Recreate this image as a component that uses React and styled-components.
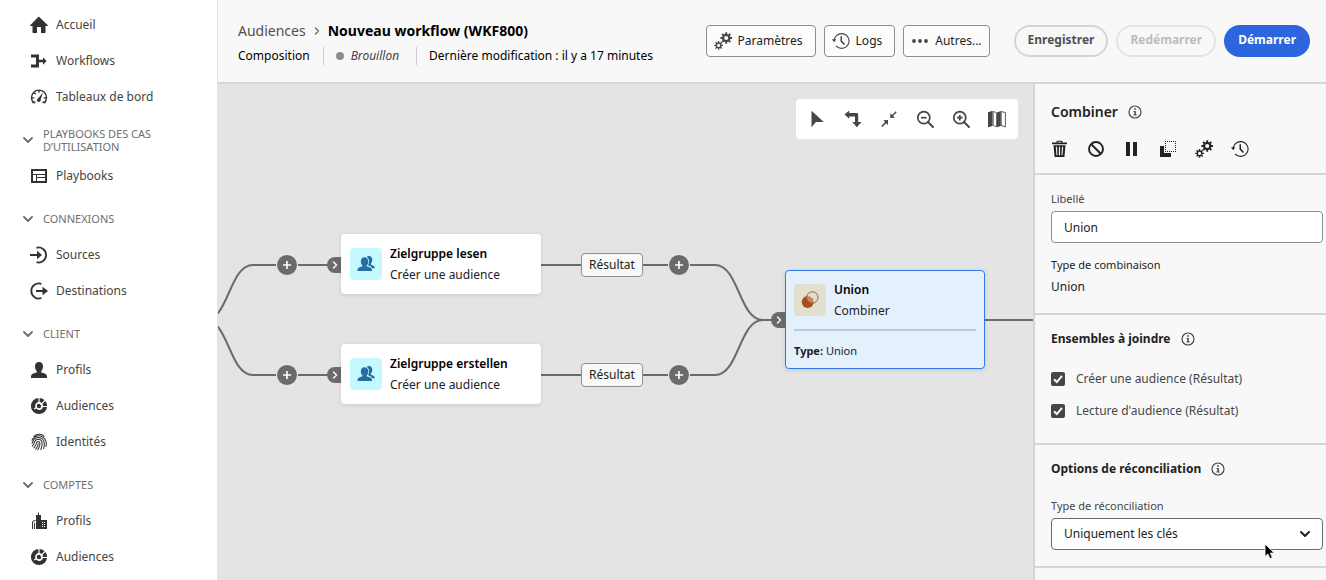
import React, { useState } from "react";
import styled, { createGlobalStyle, css } from "styled-components";

const GlobalStyle = createGlobalStyle`
  *, *::before, *::after { box-sizing: border-box; }
  html, body { margin: 0; height: 100%; }
  #root { height: 100%; }
  body {
    font-family: "Noto Sans", "Open Sans", sans-serif;
    font-size: 12px;
    line-height: 20px;
    color: #222;
    background: #f8f8f8;
    overflow: hidden;
  }
  button, input, select { font: inherit; color: inherit; margin: 0; }
  h1, h2, p, ul { margin: 0; padding: 0; }
`;

/* ---------- icons ---------- */

const Svg = styled.svg`
  display: block;
  flex: none;
  fill: currentColor;
`;

const Icon = ({ size = 18, children, box = 18 }) => (
  <Svg width={size} height={size} viewBox={`0 0 ${box} ${box}`} aria-hidden="true">
    {children}
  </Svg>
);

const gearPath = (cx, cy, outer, body, hole, teeth = 8) => {
  const pts = [];
  const step = (Math.PI * 2) / teeth;
  for (let i = 0; i < teeth; i++) {
    const a = i * step - Math.PI / 2;
    [[-0.3, body], [-0.2, outer], [0.2, outer], [0.3, body]].forEach(([o, r]) => {
      pts.push(`${(cx + Math.cos(a + o * step) * r).toFixed(2)} ${(cy + Math.sin(a + o * step) * r).toFixed(2)}`);
    });
  }
  return `M${pts.join("L")}Z M${cx - hole} ${cy}a${hole} ${hole} 0 1 0 ${hole * 2} 0a${hole} ${hole} 0 1 0 ${-hole * 2} 0Z`;
};

const HomeIcon = () => (
  <Icon><path d="M9 .8 17.8 9.2a.5.5 0 0 1-.4.8H15.5v6.3a.7.7 0 0 1-.7.7H11v-5.5a.5.5 0 0 0-.5-.5h-3a.5.5 0 0 0-.5.5V17H3.2a.7.7 0 0 1-.7-.7V10H.6a.5.5 0 0 1-.4-.8L8.5.8a.7.7 0 0 1 .5-.2Z" /></Icon>
);
const WorkflowIcon = () => (
  <Icon><path d="M1 2.500H9V7.800h4V5.300L16.500 9 13 12.700V10.200H9v5.300H1v-3h5V5.500H1Z" /></Icon>
);
const DashboardIcon = () => (
  <Icon>
    <path d="M3.6 14.8A7.500 7.500 0 1 1 14.400 14.800" fill="none" stroke="currentColor" strokeWidth="1.400" />
    <path d="M9 2v2.800M4.200 4.800l1.500 1.500M2 9.800h2.400M13.700 9.800H16" stroke="currentColor" strokeWidth="1.300" />
    <path d="M12.800 4.800 10.700 11.500a1.900 1.900 0 1 1-2.500-1.200Z" />
    <path d="M2.500 13.500h3v1.800h-3zM12.500 13.500h3v1.800h-3z" />
  </Icon>
);
const PlaybookIcon = () => (
  <Icon>
    <path fillRule="evenodd" d="M1.500 2h15a.5.5 0 0 1 .5.5v13a.5.5 0 0 1-.5.5h-15a.5.5 0 0 1-.5-.5v-13A.5.5 0 0 1 1.500 2ZM3 4v3h12V4ZM3 8v6h3V8ZM7 8v2h8V8ZM7 11v3h8v-3Z" />
  </Icon>
);
const SourceIcon = () => (
  <Icon>
    <path d="M6.500 1.800A7.500 7.500 0 1 1 6.500 16.200" fill="none" stroke="currentColor" strokeWidth="1.800" />
    <path d="M0 8h7V4.700L12 9l-5 4.300V10H0Z" />
  </Icon>
);
const DestinationIcon = () => (
  <Icon>
    <path d="M11.500 2A7.500 7.500 0 1 0 11.500 16" fill="none" stroke="currentColor" strokeWidth="1.800" />
    <path d="M6 8h6.500V4.700L18 9l-5.500 4.300V10H6Z" />
  </Icon>
);
const UserIcon = () => (
  <Icon><path d="M9 1c2.500 0 4 1.800 4 4.400 0 2-.9 3.500-1.700 4.500-.3.400-.2 1.500.4 1.700 3.300.9 5.300 2 5.300 3.900V17H1v-1.500c0-1.900 2-3 5.300-3.900.6-.2.7-1.300.4-1.700C5.900 8.900 5 7.400 5 5.400 5 2.800 6.500 1 9 1Z" /></Icon>
);
const AudienceIcon = () => (
  <Icon>
    <circle cx="9" cy="9" r="6" fill="none" stroke="currentColor" strokeWidth="4.200" />
    <circle cx="9" cy="9" r="2.300" />
    <path d="M9 6.500V0M10.500 8.200 16 2.400M11.500 9.500H18M6.500 10.500 4 12" stroke="#fff" strokeWidth="1.200" />
  </Icon>
);
const FingerprintIcon = () => (
  <Icon>
    <g fill="none" stroke="currentColor" strokeWidth="1.050" strokeLinecap="round">
      <path d="M4 3.400C6.800.6 11.800.7 14 3.400M2 7.200C4.200 2.200 10 1.600 13.600 4.600 16.500 7 16.600 10.500 16 13.500" />
      <path d="M2 10.200c.7-1 .8-2 1.600-3.200 2-3 6.500-3.400 9-.8 2.300 2.600 1.900 6.300 1 9.300" />
      <path d="M2.300 13c2-1.800 1.700-4 3.300-5.600 1.700-1.700 4.500-1.500 5.800.4 1.500 2.400.3 6.400-.6 8.700" />
      <path d="M3.800 14.800c2.300-2 2-4 3-5.500.9-1.200 2.600-.9 3 .3.400 1.500-.7 4.800-2 7.200" />
      <path d="M5.800 16.200c1.300-1.600 2-3.500 2.500-5.700" />
    </g>
  </Icon>
);
const BuildingIcon = () => (
  <Icon>
    <path fillRule="evenodd" d="M6 3h2V.5h1V3h2v5h6v9H6ZM12 10v1h1v-1ZM14 10v1h1v-1ZM12 12v1h1v-1ZM14 12v1h1v-1ZM12 14v1h1v-1ZM14 14v1h1v-1Z" />
    <path d="M2 17v-6.500C2 9 3.500 8 5.500 8v1C4 9 3 9.800 3 10.800V17ZM4 17v-6h1v6Z" />
  </Icon>
);
const GearsIcon = () => (
  <Icon>
    <path fillRule="evenodd" d={gearPath(12.2, 6, 5.9, 4.2, 2.1)} />
    <path fillRule="evenodd" d={gearPath(4.6, 13.4, 4.4, 3, 1.6)} />
  </Icon>
);
const HistoryIcon = () => (
  <Icon>
    <path d="M2.200 8A7.400 7.400 0 0 1 9.600 1.600 7.400 7.400 0 1 1 4 13.800" fill="none" stroke="currentColor" strokeWidth="1.100" />
    <path d="M-.1 7.200h4.400L2.200 10.200Z" />
    <path d="M8.500 4.300H10v4.500l3 3.200-1 1.100-3.500-3.600Z" />
  </Icon>
);
const MoreIcon = () => (
  <Icon><circle cx="3" cy="9" r="1.900" /><circle cx="9" cy="9" r="1.900" /><circle cx="15" cy="9" r="1.900" /></Icon>
);
const PointerIcon = () => (
  <Icon><path d="M3.500.8v16.400l4.400-5.300H15.800Z" /></Icon>
);
const PathIcon = () => (
  <Icon><path d="M5.200.5V3h7.300c1 0 1.700.7 1.700 1.700v7.300h3.300L12.800 17.300 8.300 12h2.700V6.500H5.200v2.300L.5 4.600Z" /></Icon>
);
const CollapseIcon = () => (
  <Icon>
    <path d="M10.300 8V3.200l1.800 1.700L15.700 1.300 16.700 2.300 13.100 5.900 15 7.800ZM8 10v5l-1.800-1.800L2.300 17 1.200 15.900 5.100 12.100 3.300 10.200Z" />
  </Icon>
);
const ZoomIcon = ({ plus }) => (
  <Icon>
    <circle cx="7.800" cy="7.700" r="6" fill="none" stroke="currentColor" strokeWidth="1.700" />
    <path d="m12 12 5 5" stroke="currentColor" strokeWidth="2" strokeLinecap="round" />
    <path d={plus ? "M5 7.700h5.600M7.800 4.900v5.600" : "M5 7.700h5.600"} stroke="currentColor" strokeWidth="1.700" />
  </Icon>
);
const MapIcon = () => (
  <Icon>
    <path d="M0 2.200 4.600.8V16L0 17.300ZM9 2.400 12.800 1V16L9 17.300Z" />
    <path d="M5.200 1.500 8.500 2.600V16.800L5.200 15.500Z" fill="none" stroke="currentColor" strokeWidth=".8" />
    <path d="M13.200 1.500 17.400 2.600V16.800L13.200 15.600Z" fill="none" stroke="currentColor" strokeWidth=".9" />
  </Icon>
);
const TrashIcon = () => (
  <Icon>
    <path fillRule="evenodd" d="M5.500 1.800C5.500 1 6 .7 6.500.7h4c.5 0 1 .3 1 1.100V2.500h4.500V4.200H1V2.500H5.500ZM6.700 1.800v.7h3.600v-.7ZM2.500 5.200h12l-1 11.200a.6.6 0 0 1-.6.600H4.100a.6.6 0 0 1-.6-.6ZM4.800 6.800l.7 8.400h1L6 6.800ZM7.900 6.800v8.400h1.200V6.800ZM11 6.800l-.5 8.400h1l.7-8.400Z" />
  </Icon>
);
const BlockIcon = () => (
  <Icon>
    <circle cx="9" cy="9" r="7" fill="none" stroke="currentColor" strokeWidth="1.900" />
    <path d="m4 4 10 10" stroke="currentColor" strokeWidth="1.900" />
  </Icon>
);
const PauseIcon = () => (
  <Icon><path d="M3 2h4v14H3zM10 2h4v14h-4z" /></Icon>
);
const DuplicateIcon = () => (
  <Icon>
    <path d="M1 6h4v7h7v4H1Z" />
    <path
      d="M6 1.500h11M6 11.500h11M6.500 3v8M16.500 3v8"
      fill="none" stroke="currentColor" strokeDasharray="1 1"
    />
  </Icon>
);
const InfoIcon = () => (
  <Icon size={14} box={14}>
    <circle cx="7" cy="7" r="6" fill="none" stroke="currentColor" strokeWidth="1.200" />
    <path d="M6.200 3.300h1.600v1.500H6.200ZM5.600 5.900h2.200v3.500h.8v1H5.500v-1h.8V6.900h-.7Z" />
  </Icon>
);
const Chevron = ({ size = 10, dir = "down", weight = 1.8 }) => (
  <Icon size={size} box={10}>
    <path
      d={dir === "down" ? "m1 3 4 4 4-4" : "m3.500 2 3 3-3 3"}
      fill="none" stroke="currentColor" strokeWidth={weight} strokeLinecap="round" strokeLinejoin="round"
    />
  </Icon>
);
const UsersIcon = () => (
  <Icon>
    <path d="M10 1.500c3-1.300 5.300.4 5.300 3.200 0 1.700-.7 2.900-1.300 3.700-.3.400-.2 1.200.3 1.400 2.200.8 3.500 1.700 3.500 3.400H15c-.6-1.600-2-2.400-4-3Z" />
    <path
      d="M7.500 2.300c2.400 0 3.800 1.700 3.800 4.100 0 1.800-.8 3.100-1.500 3.900-.3.400-.2 1.100.3 1.300 3.100.8 4.900 1.600 4.900 3.300V16H.5v-1.100c0-1.700 1.700-2.500 4.500-3.300.5-.2.600-.9.300-1.300-.7-.8-1.500-2.100-1.500-3.900 0-2.400 1.300-4.100 3.700-4.100Z"
      stroke="#c5f8ff" strokeWidth="1.400" paintOrder="stroke"
    />
  </Icon>
);
const UnionIcon = () => (
  <Icon>
    <defs>
      <pattern id="lens" width="1.600" height="1.600" patternUnits="userSpaceOnUse">
        <path d="M0 0h.9v.9H0zM.8.8h.8v.8H.8z" fill="#a84e1c" />
      </pattern>
      <clipPath id="upper"><circle cx="11.300" cy="6.500" r="5.700" /></clipPath>
    </defs>
    <circle cx="6.700" cy="11" r="6" />
    <circle cx="11.300" cy="6.500" r="5.700" fill="#e3dfcf" />
    <circle cx="6.700" cy="11" r="6" fill="url(#lens)" clipPath="url(#upper)" />
    <circle cx="11.300" cy="6.500" r="5.700" fill="none" stroke="currentColor" strokeWidth=".9" />
  </Icon>
);
const PlusIcon = () => (
  <Icon size={10} box={10}><path d="M5 1v8M1 5h8" stroke="currentColor" strokeWidth="1.600" /></Icon>
);
const CursorIcon = () => (
  <Svg width="12" height="17" viewBox="0 0 12 17" aria-hidden="true">
    <path d="M1 1v12.500l2.900-2.600 2 4.700 2.400-1-2-4.500h4Z" fill="#000" stroke="#fff" strokeWidth=".8" />
  </Svg>
);

/* ---------- shell ---------- */

const Shell = styled.div`
  display: flex;
  height: 100vh;
`;

const Sidebar = styled.nav`
  flex: none;
  width: 218px;
  padding-top: 7px;
  background: #fff;
  border-right: 1px solid #e4e4e4;
  overflow: hidden;
`;

const NavList = styled.ul`
  list-style: none;
`;

const NavLink = styled.a`
  display: flex;
  align-items: center;
  gap: 8px;
  height: 36px;
  padding-left: 30px;
  color: #444;
  text-decoration: none;
  svg { color: #323232; }
`;

const NavHeading = styled.button`
  display: flex;
  align-items: center;
  gap: 10px;
  width: 100%;
  height: 43px;
  padding: 6px 40px 0 23px;
  border: 0;
  background: none;
  color: #6e6e6e;
  font-size: 11px;
  line-height: 13px;
  text-align: left;
  text-transform: uppercase;
`;

const Main = styled.div`
  flex: 1;
  min-width: 0;
  display: flex;
  flex-direction: column;
`;

const Header = styled.header`
  flex: none;
  display: flex;
  align-items: center;
  justify-content: space-between;
  height: 84px;
  padding: 0 16px 0 20px;
  border-bottom: 2px solid #d5d5d5;
`;

const Heading = styled.div`
  display: flex;
  flex-direction: column;
  gap: 6px;
  padding-top: 3px;
  white-space: nowrap;
`;

const Crumbs = styled.div`
  display: flex;
  align-items: center;
  gap: 6px;
  color: #6e6e6e;
`;

const CrumbLink = styled.a`
  color: #505050;
  font-size: 14px;
  text-decoration: none;
`;

const Title = styled.h1`
  color: #000;
  font-size: 14px;
  line-height: 20px;
  font-weight: 700;
`;

const Meta = styled.div`
  display: flex;
  align-items: center;
  color: #000;
  line-height: 18px;
`;

const MetaItem = styled.span`
  display: flex;
  align-items: center;
  gap: 7px;
  & + & {
    margin-left: 13px;
    padding-left: 12px;
    border-left: 1px solid #d0d0d0;
  }
`;

const StatusDot = styled.span`
  width: 8px;
  height: 8px;
  border-radius: 50%;
  background: #8e8e8e;
`;

const Status = styled.em`
  color: #444;
  padding-right: 4px;
`;

const Actions = styled.div`
  display: flex;
  align-items: center;
  gap: 8px;
`;

const ToolGroup = styled(Actions)`
  margin-right: 16px;
`;

const ToolButton = styled.button`
  display: flex;
  align-items: center;
  gap: 6px;
  height: 32px;
  padding: 0 ${({ $tight }) => ($tight ? 7 : 12)}px 0 7px;
  border: 1px solid #8e8e8e;
  border-radius: 4px;
  background: #fcfcfc;
  color: #222;
  white-space: nowrap;
  svg { color: #444; }
`;

const variants = {
  secondary: css`border-color: #d5d5d5; color: #505050; background: #f8f8f8;`,
  disabled: css`border-color: #e4e4e4; color: #bdbdbd; background: #f8f8f8;`,
  primary: css`border-color: #2c65dd; color: #fff; background: #2c65dd;`,
};

const PillButton = styled.button`
  height: 32px;
  padding: 0 12px 2px;
  border: 2px solid;
  border-radius: 16px;
  font-weight: 700;
  white-space: nowrap;
  ${({ $variant }) => variants[$variant]}
`;

const Body = styled.div`
  flex: 1;
  min-height: 0;
  display: flex;
`;

/* ---------- canvas ---------- */

const Canvas = styled.main`
  position: relative;
  flex: 1;
  min-width: 0;
  overflow: hidden;
  background: #e4e4e4;
`;

const Edges = styled.svg`
  position: absolute;
  inset: 0;
  width: 100%;
  height: 100%;
  fill: none;
  stroke: #6b6b6b;
  stroke-width: 2;
`;

const CanvasToolbar = styled.div`
  position: absolute;
  top: 15px;
  right: 15px;
  display: flex;
  padding: 0 3px;
  border-radius: 4px;
  background: #fff;
`;

const IconButton = styled.button`
  display: grid;
  place-items: center;
  width: ${({ $w }) => $w}px;
  height: ${({ $h }) => $h}px;
  padding: 0;
  border: 0;
  background: none;
  color: ${({ $tone }) => $tone || "#464646"};
`;

const Placed = styled.div`
  position: absolute;
  left: ${({ $x }) => $x}px;
  top: ${({ $y }) => $y}px;
`;

const NodeCard = styled.article`
  width: 200px;
  padding: ${({ $selected }) => ($selected ? "8px 8px 7px" : "9px")};
  border-radius: 4px;
  background: ${({ $selected }) => ($selected ? "#e5f0fd" : "#fff")};
  border: ${({ $selected }) => ($selected ? "1px solid #2f7ce8" : "0")};
  box-shadow: 0 1px 4px rgba(0, 0, 0, 0.12);
`;

const NodeHead = styled.div`
  display: flex;
  align-items: center;
  gap: 8px;
`;

const NodeTile = styled.span`
  display: grid;
  place-items: center;
  width: 32px;
  height: 32px;
  border-radius: 4px;
  background: ${({ $bg }) => $bg};
  color: ${({ $fg }) => $fg};
`;

const NodeText = styled.div`
  line-height: 21px;
  white-space: nowrap;
`;

const NodeTitle = styled.h2`
  color: #000;
  font-size: 12px;
  font-weight: 600;
`;

const NodeDetail = styled.p`
  margin-top: 8px;
  padding-top: 11px;
  padding-bottom: 1px;
  border-top: 2px solid #bccbd9;
  font-size: 11px;
  line-height: 18px;
`;

const EdgeLabel = styled.span`
  display: grid;
  place-items: center;
  width: 62px;
  height: 24px;
  border: 1px solid #8e8e8e;
  border-radius: 4px;
  background: #f8f8f8;
`;

const AddButton = styled.button`
  display: grid;
  place-items: center;
  width: 22px;
  height: 22px;
  padding: 0;
  border: 1px solid #ededed;
  border-radius: 50%;
  background: #6b6b6b;
  color: #fff;
`;

const Port = styled.span`
  display: grid;
  place-items: center;
  width: 14px;
  height: 16px;
  padding-left: 2px;
  border-radius: 8px 0 0 8px;
  background: #6b6b6b;
  color: #fff;
`;

/* ---------- property panel ---------- */

const Panel = styled.aside`
  flex: none;
  width: 293px;
  border-left: 2px solid #d5d5d5;
  overflow: hidden;
`;

const Section = styled.section`
  padding: ${({ $pad }) => $pad};
  border-bottom: 2px solid #d5d5d5;
`;

const SectionTitle = styled.h2`
  display: flex;
  align-items: center;
  gap: 10px;
  margin-bottom: ${({ $gap }) => $gap}px;
  font-size: ${({ $large }) => ($large ? 14 : 12)}px;
  line-height: 20px;
  font-weight: ${({ $large }) => ($large ? 600 : 700)};
  svg { color: #464646; }
`;

const PanelTools = styled.div`
  display: flex;
  gap: 18px;
`;

const FieldLabel = styled.label`
  display: block;
  margin-bottom: 4px;
  color: ${({ $strong }) => ($strong ? "#222" : "#464646")};
  font-size: 11px;
  line-height: 16px;
`;

const controlStyle = css`
  display: block;
  width: 100%;
  height: 32px;
  padding: 0 12px;
  border: 1px solid #8e8e8e;
  border-radius: 4px;
  background: #fff;
  appearance: none;
`;

const TextInput = styled.input`
  ${controlStyle}
  margin-bottom: 14px;
`;

const SelectWrap = styled.div`
  display: grid;
  align-items: center;
  & > * { grid-area: 1 / 1; }
  & > svg { justify-self: end; margin-right: 13px; pointer-events: none; }
`;

const Select = styled.select`
  ${controlStyle}
  border-color: #6b6b6b;
`;

const CheckRow = styled.label`
  display: flex;
  align-items: center;
  gap: 11px;
  height: 32px;
  color: #464646;
  white-space: nowrap;
`;

const CheckBox = styled.span`
  display: grid;
  place-items: center;
  width: 14px;
  height: 14px;
  & > * { grid-area: 1 / 1; }
  svg { color: #fff; pointer-events: none; }
`;

const CheckInput = styled.input`
  appearance: none;
  width: 14px;
  height: 14px;
  border: 2px solid #464646;
  border-radius: 2px;
  &:checked { background: #464646; }
`;

const Pointer = styled.div`
  position: fixed;
  left: 1264px;
  top: 543px;
  pointer-events: none;
`;

/* ---------- content ---------- */

const NAV = [
  { items: [["Accueil", HomeIcon], ["Workflows", WorkflowIcon], ["Tableaux de bord", DashboardIcon]] },
  { title: "Playbooks des cas d’utilisation", items: [["Playbooks", PlaybookIcon]] },
  { title: "Connexions", items: [["Sources", SourceIcon], ["Destinations", DestinationIcon]] },
  { title: "Client", items: [["Profils", UserIcon], ["Audiences", AudienceIcon], ["Identités", FingerprintIcon]] },
  { title: "Comptes", items: [["Profils", BuildingIcon], ["Audiences", AudienceIcon]] },
];

const CANVAS_TOOLS = [
  ["Sélection", <PointerIcon />],
  ["Orientation", <PathIcon />],
  ["Ajuster", <CollapseIcon />],
  ["Zoom arrière", <ZoomIcon />],
  ["Zoom avant", <ZoomIcon plus />],
  ["Carte", <MapIcon />],
];

const PANEL_TOOLS = [
  ["Supprimer", <TrashIcon />],
  ["Désactiver", <BlockIcon />],
  ["Pause", <PauseIcon />],
  ["Dupliquer", <DuplicateIcon />],
  ["Options", <GearsIcon />],
  ["Historique", <HistoryIcon />],
];

const BRANCHES = [
  { title: "Zielgruppe lesen", y: 181 },
  { title: "Zielgruppe erstellen", y: 291 },
];

function Branch({ title, y }) {
  return (
    <>
      <Placed $x={58} $y={y - 11}><AddButton aria-label="Ajouter"><PlusIcon /></AddButton></Placed>
      <Placed $x={109} $y={y - 8}><Port><Chevron dir="right" weight={1.4} /></Port></Placed>
      <Placed $x={123} $y={y - 31}>
        <NodeCard>
          <NodeHead>
            <NodeTile $bg="#c5f8ff" $fg="#236f9f"><UsersIcon /></NodeTile>
            <NodeText>
              <NodeTitle>{title}</NodeTitle>
              <p>Créer une audience</p>
            </NodeText>
          </NodeHead>
        </NodeCard>
      </Placed>
      <Placed $x={363} $y={y - 12}><EdgeLabel>Résultat</EdgeLabel></Placed>
      <Placed $x={450} $y={y - 11}><AddButton aria-label="Ajouter"><PlusIcon /></AddButton></Placed>
    </>
  );
}

function Check({ label }) {
  const [on, setOn] = useState(true);
  return (
    <CheckRow>
      <CheckBox>
        <CheckInput type="checkbox" checked={on} onChange={() => setOn(!on)} />
        <Icon size={10} box={10}>
          <path d="m1 5.200 2.800 2.900L9 1.800" fill="none" stroke="currentColor" strokeWidth="2" />
        </Icon>
      </CheckBox>
      {label}
    </CheckRow>
  );
}

export default function App() {
  const [label, setLabel] = useState("Union");
  return (
    <Shell>
      <GlobalStyle />
      <Sidebar>
        {NAV.map(({ title, items }) => (
          <div key={title || "top"}>
            {title && <NavHeading><Chevron />{title}</NavHeading>}
            <NavList>
              {items.map(([name, Glyph]) => (
                <li key={name}><NavLink href="#"><Glyph />{name}</NavLink></li>
              ))}
            </NavList>
          </div>
        ))}
      </Sidebar>
      <Main>
        <Header>
          <Heading>
            <Crumbs>
              <CrumbLink href="#">Audiences</CrumbLink>
              <Chevron dir="right" weight={1.4} />
              <Title>Nouveau workflow (WKF800)</Title>
            </Crumbs>
            <Meta>
              <MetaItem>Composition</MetaItem>
              <MetaItem><StatusDot /><Status>Brouillon</Status></MetaItem>
              <MetaItem>Dernière modification : il y a 17 minutes</MetaItem>
            </Meta>
          </Heading>
          <Actions>
            <ToolGroup>
              <ToolButton><GearsIcon />Paramètres</ToolButton>
              <ToolButton><HistoryIcon />Logs</ToolButton>
              <ToolButton $tight><MoreIcon />Autres...</ToolButton>
            </ToolGroup>
            <PillButton $variant="secondary">Enregistrer</PillButton>
            <PillButton $variant="disabled" disabled>Redémarrer</PillButton>
            <PillButton $variant="primary">Démarrer</PillButton>
          </Actions>
        </Header>
        <Body>
          <Canvas>
            <Edges aria-hidden="true">
              <path d="M-13 236C11 236 11 181 35 181H497C521 181 521 236 545 236" />
              <path d="M-13 236C11 236 11 291 35 291H497C521 291 521 236 545 236" />
              <path d="M545 236H2000" />
            </Edges>
            {BRANCHES.map((b) => <Branch key={b.title} {...b} />)}
            <Placed $x={553} $y={228}><Port><Chevron dir="right" weight={1.4} /></Port></Placed>
            <Placed $x={567} $y={186}>
              <NodeCard $selected>
                <NodeHead>
                  <NodeTile $bg="#e3dfcf" $fg="#a84e1c"><UnionIcon /></NodeTile>
                  <NodeText>
                    <NodeTitle>Union</NodeTitle>
                    <p>Combiner</p>
                  </NodeText>
                </NodeHead>
                <NodeDetail><b>Type:</b> Union</NodeDetail>
              </NodeCard>
            </Placed>
            <CanvasToolbar>
              {CANVAS_TOOLS.map(([name, glyph]) => (
                <IconButton key={name} aria-label={name} $w={36} $h={40}>{glyph}</IconButton>
              ))}
            </CanvasToolbar>
          </Canvas>
          <Panel>
            <Section $pad="18px 3px 15px 16px">
              <SectionTitle $large $gap={18}>Combiner<InfoIcon /></SectionTitle>
              <PanelTools>
                {PANEL_TOOLS.map(([name, glyph]) => (
                  <IconButton key={name} aria-label={name} $w={18} $h={18} $tone="#222">{glyph}</IconButton>
                ))}
              </PanelTools>
            </Section>
            <Section $pad="16px 3px 16px 16px">
              <FieldLabel htmlFor="label">Libellé</FieldLabel>
              <TextInput id="label" value={label} onChange={(e) => setLabel(e.target.value)} />
              <FieldLabel as="p" $strong>Type de combinaison</FieldLabel>
              <p>Union</p>
            </Section>
            <Section $pad="14px 3px 16px 16px">
              <SectionTitle $gap={14}>Ensembles à joindre<InfoIcon /></SectionTitle>
              <Check label="Créer une audience (Résultat)" />
              <Check label="Lecture d'audience (Résultat)" />
            </Section>
            <Section $pad="14px 3px 16px 16px">
              <SectionTitle $gap={19}>Options de réconciliation<InfoIcon /></SectionTitle>
              <FieldLabel htmlFor="reconciliation">Type de réconciliation</FieldLabel>
              <SelectWrap>
                <Select id="reconciliation"><option>Uniquement les clés</option></Select>
                <Chevron weight={2} />
              </SelectWrap>
            </Section>
          </Panel>
        </Body>
      </Main>
      <Pointer><CursorIcon /></Pointer>
    </Shell>
  );
}
